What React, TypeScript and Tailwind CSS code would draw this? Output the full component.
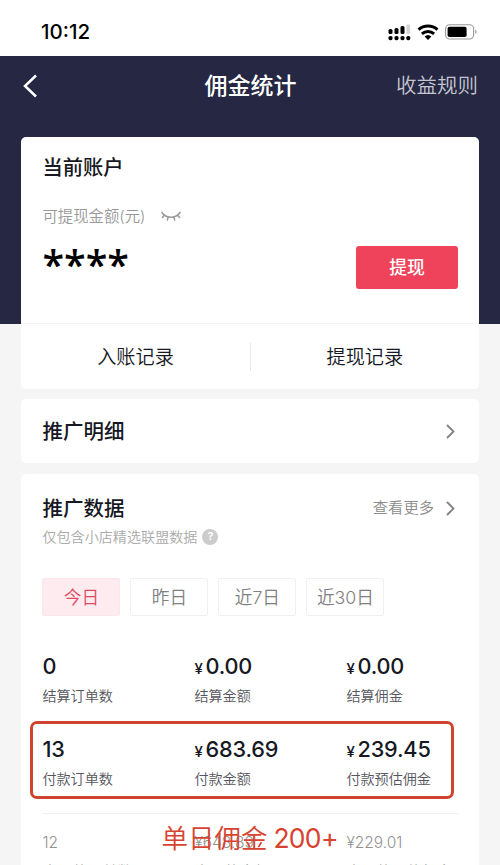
import { useState } from "react";

type Stat = {
  label: string;
  value: string;
  money?: boolean;
};

const tabs = ["今日", "昨日", "近7日", "近30日"];

const settled: Stat[] = [
  { label: "结算订单数", value: "0" },
  { label: "结算金额", value: "0.00", money: true },
  { label: "结算佣金", value: "0.00", money: true },
];

const paid: Stat[] = [
  { label: "付款订单数", value: "13" },
  { label: "付款金额", value: "683.69", money: true },
  { label: "付款预估佣金", value: "239.45", money: true },
];

const kept: Stat[] = [
  { label: "未退款订单数", value: "12" },
  { label: "未退款金额", value: "¥648.89" },
  { label: "未退款预估佣金", value: "¥229.01" },
];

function StatusBar() {
  return (
    <div className="flex h-14 items-center justify-between pt-2 pr-[23px] pl-[41px]">
      <span className="text-[20.5px] font-[550] text-black">10:12</span>
      <div className="flex items-center gap-[6px]">
        <svg width="23" height="17" viewBox="0 0 23 17" fill="#000">
          <rect x="0.5" y="5" width="4" height="5" rx="1.5" />
          <rect x="6.5" y="4" width="4" height="6" rx="1.5" />
          <rect x="12.5" y="2" width="4" height="8" rx="1.5" />
          <rect x="18.5" y="0.5" width="3.6" height="9.5" rx="1" fill="#d4d4d4" />
          <rect x="0.5" y="12" width="4" height="4.2" rx="1.6" />
          <rect x="6.5" y="12" width="4" height="4.2" rx="1.6" />
          <rect x="12.5" y="12" width="4" height="4.2" rx="1.6" />
          <rect x="18.3" y="12" width="4" height="4.2" rx="1.6" />
        </svg>
        <svg width="22" height="16" viewBox="0 0 22 16" fill="none" stroke="#000" strokeWidth="3">
          <path d="M1.5 5.7a14 14 0 0 1 19 0" />
          <path d="M4.9 9.9a9 9 0 0 1 12.2 0" />
          <path d="M11 15.9 7.6 12.6a5 5 0 0 1 6.8 0Z" fill="#000" stroke="none" />
        </svg>
        <svg width="32" height="16" viewBox="0 0 32 16">
          <rect x="0.6" y="0.8" width="28" height="14.2" rx="4" fill="none" stroke="#999" strokeWidth="1.1" />
          <rect x="2.6" y="2.8" width="19" height="10.2" rx="1.8" fill="#000" />
          <path d="M30.4 5.8v4.2c1.3-.5 1.3-3.7 0-4.2Z" fill="#777" />
        </svg>
      </div>
    </div>
  );
}

function ClosedEye() {
  return (
    <svg width="20" height="11" viewBox="0 0 20 11" fill="none" stroke="#999" strokeWidth="1.5" strokeLinecap="round">
      <path d="M1 1.5c4.2 6.4 13.8 6.4 18 0" />
      <path d="M3.4 4.2 1.4 6.5M7.3 6 6.3 9M12.7 6l1 3M16.6 4.2l2 2.3" />
    </svg>
  );
}

function Arrow() {
  return (
    <svg width="9" height="15" viewBox="0 0 9 15" fill="none" stroke="#858585" strokeWidth="1.9">
      <path d="m1 1 6.5 6.5L1 14" />
    </svg>
  );
}

function StatRow({ stats }: { stats: Stat[] }) {
  return (
    <div className="grid grid-cols-[152px_152px_1fr]">
      {stats.map((stat) => (
        <div key={stat.label}>
          <p className="h-7 text-[21.7px] leading-7 font-[550] tracking-[-0.2px] text-[#161823]">
            {stat.money && <span className="mr-[3px] text-[15px] font-medium">¥</span>}
            {stat.value}
          </p>
          <p className="mt-[6px] text-[14.1px] leading-5 font-[350] text-[#55565d]">{stat.label}</p>
        </div>
      ))}
    </div>
  );
}

export default function App() {
  const [active, setActive] = useState(tabs[0]);

  return (
    <div className="h-[865px] w-[500px] overflow-hidden bg-[#f5f5f5] font-['Inter','Noto_Sans_CJK_SC',sans-serif]">
      <div className="bg-white">
        <StatusBar />
      </div>

      <header className="h-[268px] bg-[#252743]">
        <div className="grid h-[60px] grid-cols-[1fr_auto_1fr] items-center pr-[22px] pl-[23px] text-white">
          <svg width="15" height="24" viewBox="0 0 15 24" fill="none" stroke="#fff" strokeWidth="2.5">
            <path d="M13 1.5 2 12l11 10.5" />
          </svg>
          <h1 className="text-[23px] font-medium whitespace-nowrap">佣金统计</h1>
          <span className="text-right text-[20.5px] font-[350] text-[#c4c5d0]">收益规则</span>
        </div>
      </header>

      <main className="mr-[21px] ml-[21.4px] -mt-[187.5px] flex flex-col gap-[10.5px]">
        <section className="h-[252px] rounded-[5px] bg-white">
          <div className="h-[187.5px] border-b border-[#f3f3f4] px-[21px] pt-4">
            <h2 className="text-[20.3px] leading-[30px] font-medium text-[#161823]">当前账户</h2>
            <div className="mt-[23px] flex items-center gap-4 text-[15.4px] leading-[22px] font-[350] text-[#999]">
              可提现金额(元)
              <ClosedEye />
            </div>
            <div className="mt-[18px] flex items-start justify-between">
              <span className="-mt-[2px] font-['Open_Sans'] text-[39.5px] leading-10 font-semibold text-black">****</span>
              <button className="h-[43px] w-[102px] rounded-[3px] bg-[#ee435b] pt-[2px] text-[17.8px] font-medium text-white">提现</button>
            </div>
          </div>
          <div className="flex h-[65px] items-center text-[19.2px] font-[350] text-[#161823]">
            <span className="flex-1 pt-px text-center">入账记录</span>
            <i className="h-7 w-px bg-[#e8e8e9]" />
            <span className="flex-1 pt-px text-center">提现记录</span>
          </div>
        </section>

        <section className="flex h-[64px] items-center justify-between rounded-[5px] bg-white pr-[24px] pl-[21px]">
          <h2 className="pt-[2px] text-[20.5px] font-medium text-[#161823]">推广明细</h2>
          <Arrow />
        </section>

        <section className="h-[420px] rounded-[5px] bg-white px-[21px] pt-5">
          <div className="flex h-[30px] items-center justify-between">
            <h2 className="pt-[2px] text-[20.5px] font-medium text-[#161823]">推广数据</h2>
            <div className="mr-[3px] flex items-center gap-[12px] text-[15.3px] font-[350] text-[#8c8c8c]">
              查看更多
              <Arrow />
            </div>
          </div>
          <div className="flex h-[26px] items-center gap-[5px] text-[14.1px] font-[350] text-[#aaa]">
            仅包含小店精选联盟数据
            <span className="flex size-[16px] items-center justify-center rounded-full bg-[#ccc] text-[11px] font-semibold text-white">?</span>
          </div>

          <div className="mt-[28.5px] flex gap-[10px]">
            {tabs.map((tab) => (
              <button
                key={tab}
                onClick={() => setActive(tab)}
                className={`h-[38px] w-[78px] rounded-[2px] border pt-[3px] text-[17.7px] font-[350] ${
                  tab === active ? "border-[#fbe6ea] bg-[#feebef] text-[#dc4a62]" : "border-[#f0f0f0] text-[#808080]"
                }`}
              >
                {tab}
              </button>
            ))}
          </div>

          <div className="mt-9">
            <StatRow stats={settled} />
          </div>
          <div className="-ml-[12px] mt-[15px] h-[78px] w-[424px] rounded-[7px] border-[3px] border-[#d0442f] px-[9px] pt-[11px]">
            <StatRow stats={paid} />
          </div>

          <div className="relative mt-[14px] grid grid-cols-[152px_152px_1fr] border-t border-[#f1f1f1] pt-[18px] text-[#929292]">
            {kept.map((stat) => (
              <div key={stat.label}>
                <p className="text-[15.5px] leading-[22px] font-[350]">{stat.value}</p>
                <p className="mt-[8px] text-[15px] leading-5 font-[350] whitespace-nowrap">{stat.label}</p>
              </div>
            ))}
            <span className="absolute top-[6px] left-[119px] flex items-center gap-[6px] text-[26.5px] leading-9 whitespace-nowrap text-[#d8432f]">
              <span className="font-[350]">单日佣金</span>
              <span className="tracking-[-0.7px]">200+</span>
            </span>
          </div>
        </section>
      </main>
    </div>
  );
}
